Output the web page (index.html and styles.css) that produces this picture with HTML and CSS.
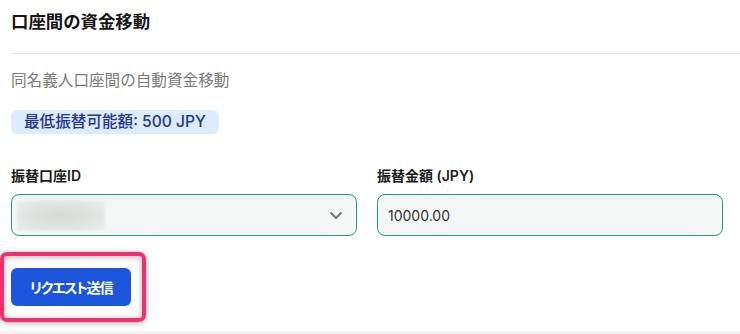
FILE: index.html
```html
<!DOCTYPE html>
<html lang="ja">
<head>
<meta charset="utf-8">
<link rel="stylesheet" href="styles.css">
</head>
<body>
<div class="card">
  <div class="card-header">
    <h2 class="title">口座間の資金移動</h2>
  </div>
  <div class="card-body">
    <p class="subtitle">同名義人口座間の自動資金移動</p>
    <div class="badge">最低振替可能額: 500 JPY</div>
    <div class="form-grid">
      <div class="field">
        <label class="label">振替口座ID</label>
        <div class="control select">
          <span class="redacted"></span>
          <svg class="chevron" width="12" height="7" viewBox="0 0 12 7"><path d="M1 1l5 5 5-5" fill="none" stroke="#6b7280" stroke-width="1.8" stroke-linecap="round" stroke-linejoin="round"/></svg>
        </div>
      </div>
      <div class="field">
        <label class="label">振替金額 (JPY)</label>
        <div class="control input">10000.00</div>
      </div>
    </div>
    <div class="actions">
      <button class="btn">リクエスト送信</button>
      <span class="highlight"></span>
    </div>
  </div>
</div>
</body>
</html>
```
FILE: styles.css
```css
html, body {
  margin: 0;
  padding: 0;
  background: #f3f3f4;
  font-family: Inter, "Noto Sans CJK JP", sans-serif;
}
.card {
  background: #ffffff;
  padding-left: 11px;
  padding-bottom: 25px;
}
.card-header {
  padding-top: 9px;
  padding-bottom: 18px;
  border-bottom: 1px solid #e6e6e6;
}
.title {
  margin: 0;
  font-size: 17.4px;
  line-height: 26px;
  font-weight: 700;
  color: #151515;
}
.card-body {
  width: 712px;
  padding-top: 15px;
}
.subtitle {
  margin: 0;
  font-size: 15.6px;
  line-height: 24px;
  color: #7a7a7a;
}
.badge {
  display: inline-block;
  margin-top: 17px;
  padding: 0 13px;
  height: 24px;
  line-height: 24px;
  border-radius: 6px;
  background: #dcebfd;
  color: #26358c;
  font-size: 15.6px;
  font-weight: 500;
}
.form-grid {
  display: grid;
  grid-template-columns: 1fr 1fr;
  column-gap: 20px;
  margin-top: 32px;
}
.field {
  display: flex;
  flex-direction: column;
  gap: 8px;
}
.label {
  font-size: 14px;
  line-height: 20px;
  font-weight: 600;
  color: #1a1a1a;
}
.control {
  box-sizing: border-box;
  height: 42px;
  border: 1px solid #1e9e72;
  border-radius: 8px;
  background: #f3f8f6;
  display: flex;
  align-items: center;
}
.select {
  justify-content: space-between;
  padding: 0 14px 0 5px;
}
.redacted {
  width: 88px;
  height: 31px;
  background: radial-gradient(ellipse at 50% 50%, #d4dad6 0%, #dde3df 50%, #e9efeb 100%);
  filter: blur(1.5px);
}
.input {
  padding: 0 10px;
  font-size: 14px;
  color: #333;
}
.actions {
  position: relative;
  margin-top: 32px;
  display: flex;
}
.btn {
  width: 120px;
  height: 38px;
  border: none;
  border-radius: 6px;
  background: #1b56dc;
  color: #fff;
  font-family: Inter, "Noto Sans CJK JP", sans-serif;
  font-size: 14.2px;
  letter-spacing: -1.4px;
  font-weight: 700;
  font-feature-settings: "palt";
  padding: 0;
}
.highlight {
  position: absolute;
  left: -11px;
  top: -16px;
  width: 146px;
  height: 70px;
  box-sizing: border-box;
  border: 4px solid #f72e6d;
  border-radius: 7px;
  box-shadow: 0 1px 6px rgba(0,0,0,0.3), inset 0 1px 6px rgba(0,0,0,0.3);
}
```
